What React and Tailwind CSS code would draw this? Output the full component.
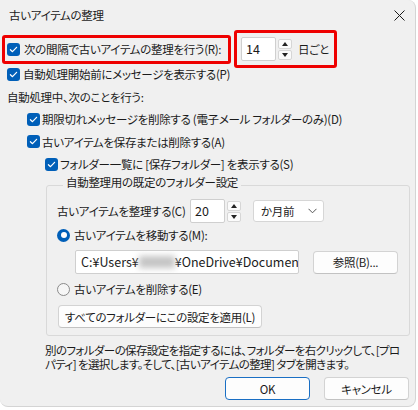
import React from "react";

function Check() {
  return (
    <span className="w-[13px] h-[13px] rounded-[3px] bg-[#005fb8] flex items-center justify-center shrink-0">
      <svg width="9" height="9" viewBox="0 0 9 9">
        <path d="M1.4 4.7 L3.5 6.7 L7.6 2.3" fill="none" stroke="white" strokeWidth="1.2" strokeLinecap="round" strokeLinejoin="round" />
      </svg>
    </span>
  );
}

function RadioOn() {
  return (
    <span className="w-[13px] h-[13px] rounded-full bg-[#005fb8] flex items-center justify-center shrink-0">
      <span className="w-[6px] h-[6px] rounded-full bg-white" />
    </span>
  );
}

function RadioOff() {
  return <span className="w-[13px] h-[13px] rounded-full border border-[#8a8a8a] bg-[#f6f6f6] shrink-0" />;
}

function Spin({ value }) {
  return (
    <div className="flex items-center gap-[2px]">
      <div className="w-[35px] h-[24px] bg-white border border-[#cfcfcf] rounded-[2px] flex items-center pl-[4px] text-[12.5px] tracking-normal">
        {value}
      </div>
      <div className="flex flex-col gap-[1px]">
        <div className="w-[14px] h-[10px] bg-[#fbfbfb] border border-[#d6d6d6] rounded-[2px] flex items-center justify-center">
          <svg width="6" height="4" viewBox="0 0 6 4"><path d="M0 4 L3 0 L6 4 Z" fill="#222" /></svg>
        </div>
        <div className="w-[14px] h-[10px] bg-[#fbfbfb] border border-[#d6d6d6] rounded-[2px] flex items-center justify-center">
          <svg width="6" height="4" viewBox="0 0 6 4"><path d="M0 0 L3 4 L6 0 Z" fill="#222" /></svg>
        </div>
      </div>
    </div>
  );
}

function Btn({ children, className = "" }) {
  return (
    <div className={"h-[23px] bg-[#fdfdfd] border border-[#d3d3d3] border-b-[#c2c2c2] rounded-[4px] flex items-center justify-center whitespace-nowrap shrink-0 " + className}>
      {children}
    </div>
  );
}

export default function App() {
  return (
    <div className="w-[418px] h-[410px] bg-white overflow-hidden text-[#1b1b1b] font-['Yu_Gothic_UI','Noto_Sans_CJK_JP',sans-serif] [font-feature-settings:'palt'] text-[11.5px] tracking-[-0.3px] leading-[16px]">
      <div className="w-[416px] h-[407px] bg-[#f0f0f0] rounded-tr-[8px] rounded-b-[8px] border-r border-b border-[#d4d4d4] flex flex-col">
        {/* title bar */}
        <div className="h-[30px] flex items-center justify-between pl-[9px] pr-[10px] shrink-0">
          <span>古いアイテムの整理</span>
          <svg width="11" height="11" viewBox="0 0 11 11">
            <path d="M0.5 0.5 L10.5 10.5 M10.5 0.5 L0.5 10.5" stroke="#1b1b1b" strokeWidth="1" />
          </svg>
        </div>

        {/* row 1 */}
        <div className="h-[38px] flex items-center shrink-0">
          <div className="ml-[2px] w-[229px] h-[29px] border-[3px] border-[#ee0000] rounded-[3px] flex items-center pl-[2px] gap-[4px]">
            <Check />
            <span className="whitespace-nowrap">次の間隔で古いアイテムの整理を行う(R):</span>
          </div>
          <div className="ml-[3px] w-[103px] h-[38px] border-[3px] border-[#ee0000] rounded-[3px] flex items-center pl-[4px] gap-[6px]">
            <Spin value="14" />
            <span>日ごと</span>
          </div>
        </div>

        {/* row 2 */}
        <div className="-mt-[6px] h-[24px] flex items-center pl-[7px] gap-[3px] shrink-0">
          <Check />
          <span className="whitespace-nowrap">自動処理開始前にメッセージを表示する(P)</span>
        </div>

        <div className="h-[22px] flex items-center pl-[7px] shrink-0">自動処理中、次のことを行う:</div>

        <div className="h-[22px] flex items-center pl-[27px] gap-[2px] shrink-0">
          <Check />
          <span className="whitespace-nowrap">期限切れメッセージを削除する (電子メール フォルダーのみ)(D)</span>
        </div>
        <div className="h-[23px] flex items-center pl-[27px] gap-[2px] shrink-0">
          <Check />
          <span className="whitespace-nowrap">古いアイテムを保存または削除する(A)</span>
        </div>
        <div className="h-[22px] flex items-center pl-[45px] gap-[2px] shrink-0">
          <Check />
          <span className="whitespace-nowrap">フォルダー一覧に [保存フォルダー] を表示する(S)</span>
        </div>

        {/* group box */}
        <div className="mt-[10px] ml-[46px] w-[364px] h-[151px] border border-[#d9d9d9] rounded-[3px] pl-[10px] pr-[10px] shrink-0 flex flex-col">
          <div className="-mt-[12px] ml-[6px] self-start px-[3px] bg-[#f0f0f0] h-[16px] whitespace-nowrap">自動整理用の既定のフォルダー設定</div>
          <div className="mt-[10px] h-[22px] flex items-center">
            <span className="w-[133px] whitespace-nowrap">古いアイテムを整理する(C)</span>
            <Spin value="20" />
            <div className="ml-[12px] w-[71px] h-[22px] bg-white border border-[#d6d6d6] rounded-[3px] flex items-center pl-[7px] pr-[6px] justify-between">
              <span>か月前</span>
              <svg width="9" height="6" viewBox="0 0 9 6"><path d="M0.5 0.8 L4.5 4.8 L8.5 0.8" fill="none" stroke="#555" strokeWidth="1" /></svg>
            </div>
          </div>
          <div className="mt-[2px] h-[22px] flex items-center gap-[4px]">
            <RadioOn />
            <span className="whitespace-nowrap">古いアイテムを移動する(M):</span>
          </div>
          <div className="mt-[4px] flex items-center">
            <div className="ml-[18px] w-[224px] h-[24px] bg-white border border-[#cfcfcf] rounded-[2px] flex items-center pl-[5px] overflow-hidden whitespace-nowrap shrink-0 text-[12.5px] tracking-normal">
              <span>C:¥Users¥</span>
              <span className="inline-block w-[36px] h-[12px] bg-[#c4c4c4] blur-[3px] shrink-0" />
              <span>¥OneDrive¥Documents¥Outlook ファイル¥archive.pst</span>
            </div>
            <Btn className="ml-[14px] w-[85px]">参照(B)...</Btn>
          </div>
          <div className="mt-[4px] h-[22px] flex items-center gap-[4px]">
            <RadioOff />
            <span className="whitespace-nowrap">古いアイテムを削除する(E)</span>
          </div>
          <Btn className="mt-[5px] ml-[1px] w-[204px]">すべてのフォルダーにこの設定を適用(L)</Btn>
        </div>

        <p className="mt-[7px] pl-[45px] leading-[14px] whitespace-nowrap tracking-[-0.6px]">
          別のフォルダーの保存設定を指定するには、フォルダーを右クリックして、[プロ
          <br />
          パティ] を選択します。そして、[古いアイテムの整理] タブを開きます。
        </p>

        <div className="mt-[6px] flex justify-end gap-[14px] pr-[6px]">
          <Btn className="w-[85px] !border-[#1a6fc4] !border-[1.5px]">OK</Btn>
          <Btn className="w-[85px]">キャンセル</Btn>
        </div>
      </div>
    </div>
  );
}
